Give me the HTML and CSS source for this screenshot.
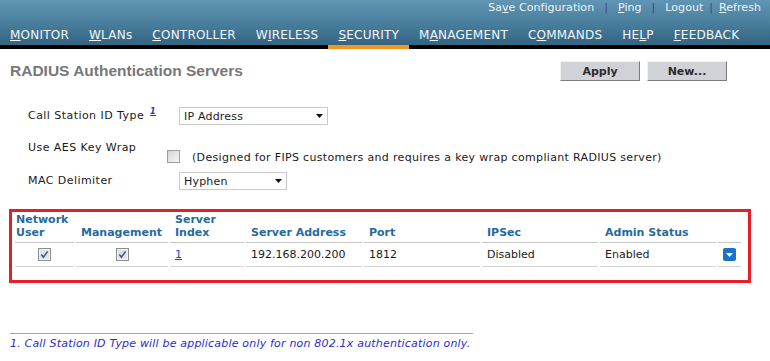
FILE: index.html
```html
<!DOCTYPE html>
<html lang="en">
<head>
    <meta charset="UTF-8">
    <title>RADIUS Authentication Servers</title>
    <link rel="stylesheet" href="styles.css">
</head>
<body>
    <div id="masthead">
        <div id="top-links">
            <a href="#">Sa<u>v</u>e Configuration</a>
            <span class="sep">|</span>
            <a href="#"><u>P</u>ing</a>
            <span class="sep">|</span>
            <a href="#">Lo<u>g</u>out</a>
            <span class="sep tight">|</span>
            <a href="#"><u>R</u>efresh</a>
        </div>
        <ul id="main-nav">
            <li><u>M</u>ONITOR</li>
            <li><u>W</u>LANs</li>
            <li><u>C</u>ONTROLLER</li>
            <li>W<u>I</u>RELESS</li>
            <li class="active"><u>S</u>ECURITY</li>
            <li>M<u>A</u>NAGEMENT</li>
            <li>C<u>O</u>MMANDS</li>
            <li>HE<u>L</u>P</li>
            <li><u>F</u>EEDBACK</li>
        </ul>
    </div>

    <div id="page-head">
        <h2>RADIUS Authentication Servers</h2>
        <div class="actions">
            <button type="button">Apply</button>
            <button type="button">New...</button>
        </div>
    </div>

    <!-- global settings -->
    <div id="settings">
        <div class="field first">
            <div class="field-label">Call Station ID Type <sup><a href="#">1</a></sup></div>
            <div class="select wide">
                <span>IP Address</span>
                <svg width="7" height="4" viewBox="0 0 7 4"><path d="M0 0H7L3.5 4Z" fill="#111"/></svg>
            </div>
        </div>
        <div class="field aes">
            <div class="field-label">Use AES Key Wrap</div>
            <div class="aes-value">
                <span class="checkbox"></span>
                <span>(Designed for FIPS customers and requires a key wrap compliant RADIUS server)</span>
            </div>
        </div>
        <div class="field last">
            <div class="field-label">MAC Delimiter</div>
            <div class="select narrow">
                <span>Hyphen</span>
                <svg width="7" height="4" viewBox="0 0 7 4"><path d="M0 0H7L3.5 4Z" fill="#111"/></svg>
            </div>
        </div>
    </div>

    <!-- server list -->
    <div id="server-box">
        <table id="servers">
            <colgroup>
                <col style="width: 59px">
                <col style="width: 92px">
                <col style="width: 74px">
                <col style="width: 116px">
                <col style="width: 116px">
                <col style="width: 116px">
                <col style="width: 116px">
                <col style="width: 23px">
            </colgroup>
            <thead>
                <tr>
                    <th class="narrow-cell">Network User</th>
                    <th>Management</th>
                    <th>Server Index</th>
                    <th>Server Address</th>
                    <th>Port</th>
                    <th>IPSec</th>
                    <th>Admin Status</th>
                    <th></th>
                </tr>
            </thead>
            <tbody>
                <tr>
                    <td class="center">
                        <svg class="tick" width="13" height="13" viewBox="0 0 13 13"><rect x="0.5" y="0.5" width="12" height="12" fill="#e2e3e8" stroke="#8d8d8d"/><rect x="1.5" y="1.5" width="10" height="10" fill="none" stroke="#f4f4f6"/><path d="M3.3 6.4L5.4 9.2L9.6 3.4" fill="none" stroke="#44548c" stroke-width="1.6"/></svg>
                    </td>
                    <td class="center">
                        <svg class="tick" width="13" height="13" viewBox="0 0 13 13"><rect x="0.5" y="0.5" width="12" height="12" fill="#e2e3e8" stroke="#8d8d8d"/><rect x="1.5" y="1.5" width="10" height="10" fill="none" stroke="#f4f4f6"/><path d="M3.3 6.4L5.4 9.2L9.6 3.4" fill="none" stroke="#44548c" stroke-width="1.6"/></svg>
                    </td>
                    <td><a href="#">1</a></td>
                    <td>192.168.200.200</td>
                    <td>1812</td>
                    <td>Disabled</td>
                    <td>Enabled</td>
                    <td class="center">
                        <svg class="row-menu" width="13" height="13" viewBox="0 0 13 13"><rect width="13" height="13" rx="2" fill="#1b72c6"/><path d="M3 5H10L6.5 9Z" fill="#fff"/></svg>
                    </td>
                </tr>
            </tbody>
        </table>
    </div>

    <div id="footnote">
        <p>1. Call Station ID Type will be applicable only for non 802.1x authentication only.</p>
    </div>
</body>
</html>
```

FILE: styles.css
```css
*{
    box-sizing: border-box;
}
body{
    margin: 0;
    font-family: "DejaVu Sans", Verdana, sans-serif;
    font-size: 11px;
    color: #1a1a1a;
    background: #fff;
}
a{
    color: #1a3fc4;
}
/*
* Masthead
*/
#masthead{
    height: 49px;
    background: linear-gradient(#6096b4, #4a7f9e 45%, #2f5f7c);
}
#top-links{
    display: flex;
    justify-content: flex-end;
    align-items: center;
    height: 14px;
    padding-right: 9px;
    font-size: 11px;
    letter-spacing: 0.05px;
}
#top-links a{
    color: #eef3f6;
    text-decoration: none;
}
#top-links .sep{
    color: #4b3d86;
    margin: 0 10px;
}
#top-links .sep.tight{
    margin: 0 6px;
}
#main-nav{
    display: flex;
    list-style: none;
    margin: 12px 0 0 0;
    padding: 0;
    height: 23px;
    border-bottom: 4px solid #000;
}
#main-nav li{
    padding: 0 10px;
    height: 23px;
    line-height: 18px;
    font-size: 12px;
    letter-spacing: 0.22px;
    color: #f2f6f8;
    border-bottom: 4px solid transparent;
    margin-bottom: -4px;
}
#main-nav li.active{
    border-bottom-color: #f7941d;
}
/*
* Page head
*/
#page-head{
    display: flex;
    justify-content: space-between;
    align-items: center;
    height: 20px;
    margin-top: 12px;
    padding: 0 43px 0 10px;
}
#page-head h2{
    margin: 0;
    font-family: "Liberation Sans", Arial, sans-serif;
    font-size: 15.5px;
    color: #777;
}
.actions{
    display: flex;
    gap: 7px;
}
.actions button{
    width: 80px;
    height: 20px;
    padding: 0;
    font-family: "DejaVu Sans", Verdana, sans-serif;
    font-size: 11px;
    font-weight: bold;
    color: #2b2b2b;
    background: #d1d2d8;
    border: 1px solid;
    border-color: #f2f2f2 #7c7c7c #7c7c7c #f2f2f2;
}
/*
* Settings
*/
#settings{
    padding-left: 28px;
}
.field{
    display: flex;
}
.field.first{
    margin-top: 26px;
}
.field.aes{
    margin-top: 16px;
}
.field.last{
    margin-top: 8px;
}
.field-label{
    width: 139px;
    height: 18px;
    line-height: 18px;
    letter-spacing: 0.45px;
}
.field.aes .field-label{
    height: 14px;
    line-height: 14px;
}
.field-label sup{
    font-size: 8px;
    line-height: 0;
    font-weight: bold;
    font-style: italic;
    margin-left: 2px;
    vertical-align: 5px;
}
.select{
    display: flex;
    justify-content: space-between;
    align-items: center;
    height: 18px;
    margin-left: 12px;
    padding: 0 4px;
    border: 1px solid #c9c9c9;
    background: #fff;
    letter-spacing: 0.2px;
}
.select.wide{
    width: 149px;
}
.select.narrow{
    width: 108px;
}
.aes-value{
    display: flex;
    align-items: center;
    gap: 12px;
    margin-top: 7px;
    letter-spacing: 0.33px;
}
.aes-value span:last-child{
    margin-top: 3px;
}
.checkbox{
    display: block;
    width: 13px;
    height: 13px;
    border: 1px solid #9e9e9e;
    background: linear-gradient(135deg, #d4d4d8, #f6f6f8);
}
/*
* Server table
*/
#server-box{
    width: 742px;
    margin: 19px 0 0 9px;
    padding: 0 0 13px 0;
    border: 3px solid #e51f28;
}
#servers{
    table-layout: fixed;
    width: 730px;
    margin-left: 1px;
    border-collapse: separate;
    border-spacing: 2px 0;
}
#servers th{
    padding: 1px 5px 3px 5px;
    height: 31px;
    line-height: 13px;
    vertical-align: bottom;
    text-align: left;
    color: #266a9c;
    font-weight: bold;
    border-bottom: 1px solid #c6c6c6;
}
#servers th.narrow-cell{
    padding-left: 1px;
}
#servers td{
    height: 24px;
    padding: 0 5px;
    vertical-align: middle;
    border-bottom: 1px solid #d4d4d4;
}
#servers td.center{
    text-align: center;
    padding: 0;
}
#servers svg{
    display: block;
    margin: 0 auto;
}
/*
* Footnote
*/
#footnote{
    width: 463px;
    margin: 50px 0 0 10px;
    border-top: 1px solid #a2a2b4;
}
#footnote p{
    margin: 3px 0 0 0;
    line-height: 14px;
    font-style: italic;
    letter-spacing: 0.19px;
    color: #2a2ad6;
}
```
